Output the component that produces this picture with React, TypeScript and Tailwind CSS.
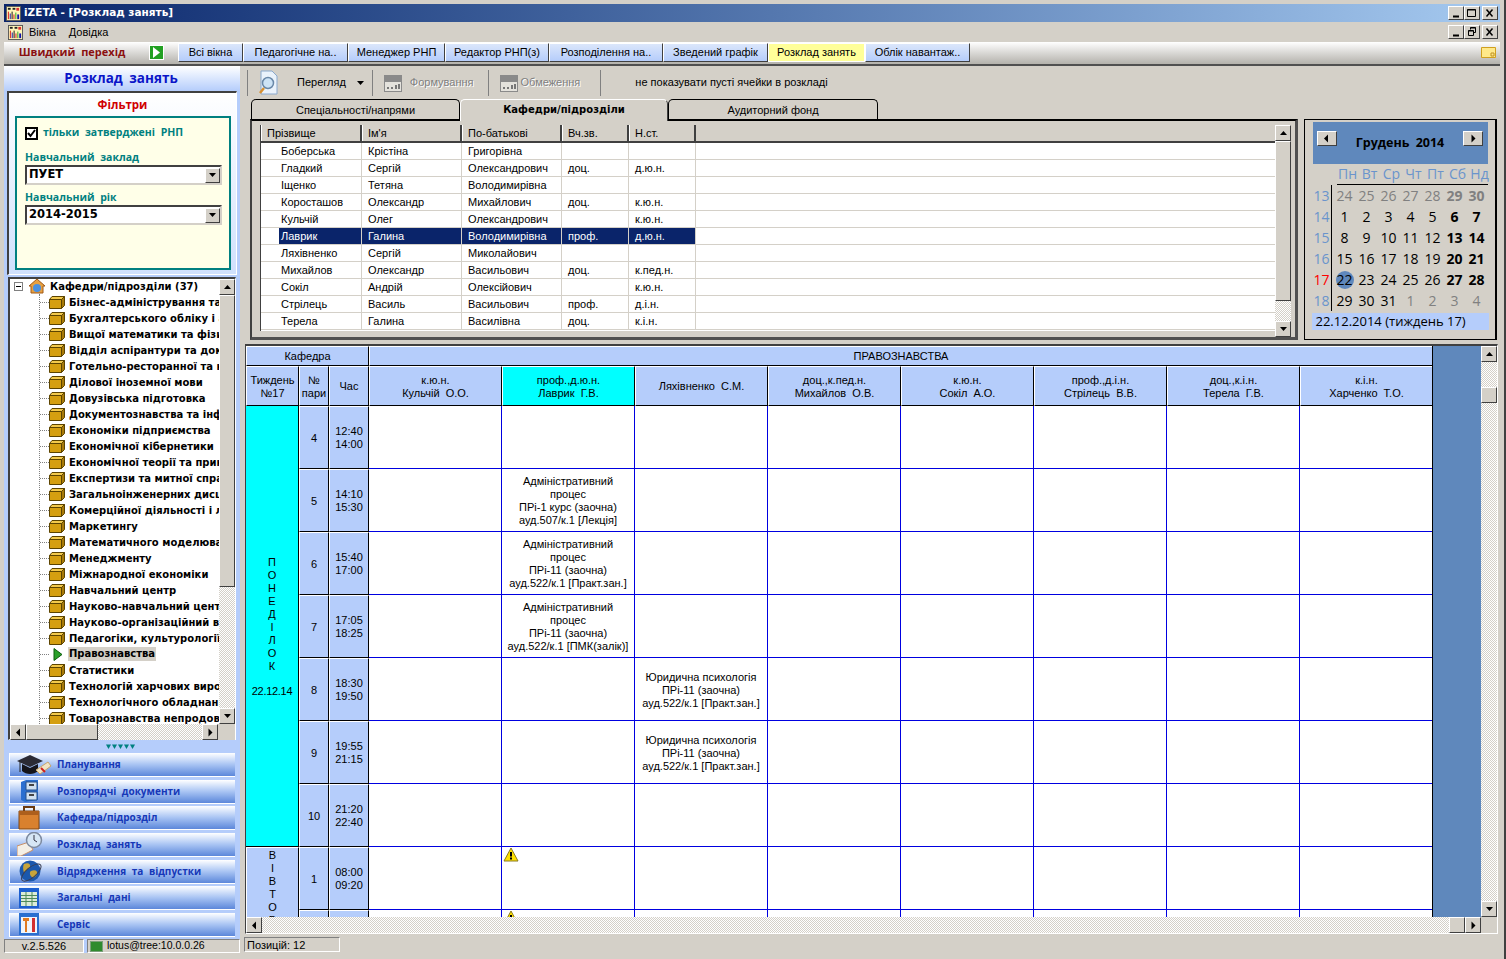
import type { ReactNode } from "react";

const raised =
  "border border-t-white border-l-white border-r-[#404040] border-b-[#404040] bg-[#d4d0c8] flex items-center justify-center shrink-0";
const dither =
  "bg-[repeating-conic-gradient(#d4d0c8_0%_25%,#ffffff_0%_50%)] bg-[length:2px_2px]";
const comic = "font-['Open_Sans',sans-serif] font-bold [word-spacing:3px]";
const headCell =
  "bg-[#b5cdfb] border border-t-white border-l-white border-r-black border-b-black flex items-center justify-center text-center leading-[13px] pt-[1px]";

const tabs = [
  { label: "Всі вікна", w: "w-[65px]" },
  { label: "Педагогічне на..", w: "w-[105px]" },
  { label: "Менеджер РНП", w: "w-[97px]" },
  { label: "Редактор РНП(з)", w: "w-[104px]" },
  { label: "Розподілення на..", w: "w-[114px]" },
  { label: "Зведений графік", w: "w-[105px]" },
  { label: "Розклад занять", w: "w-[97px]", active: true },
  { label: "Облік навантаж..", w: "w-[105px]" },
];

const departments = [
  "Бізнес-адміністрування та права",
  "Бухгалтерського обліку і аудиту",
  "Вищої математики та фізики",
  "Відділ аспірантури та докторантури",
  "Готельно-ресторанної та курортної",
  "Ділової іноземної мови",
  "Довузівська підготовка",
  "Документознавства та інформації",
  "Економіки підприємства",
  "Економічної кібернетики",
  "Економічної теорії та прикладної",
  "Експертизи та митної справи",
  "Загальноінженерних дисциплін",
  "Комерційної діяльності і логістики",
  "Маркетингу",
  "Математичного моделювання",
  "Менеджменту",
  "Міжнародної економіки",
  "Навчальний центр",
  "Науково-навчальний центр",
  "Науково-організаційний відділ",
  "Педагогіки, культурології та",
  "Правознавства",
  "Статистики",
  "Технологій харчових виробництв",
  "Технологічного обладнання",
  "Товарознавства непродовольчих",
];

const teachers = [
  ["Боберська", "Крістіна", "Григорівна", "", ""],
  ["Гладкий", "Сергій", "Олександрович", "доц.", "д.ю.н."],
  ["Іщенко", "Тетяна", "Володимирівна", "", ""],
  ["Коросташов", "Олександр", "Михайлович", "доц.", "к.ю.н."],
  ["Кульчій", "Олег", "Олександрович", "", "к.ю.н."],
  ["Лаврик", "Галина", "Володимирівна", "проф.", "д.ю.н."],
  ["Ляхівненко", "Сергій", "Миколайович", "", ""],
  ["Михайлов", "Олександр", "Васильович", "доц.", "к.пед.н."],
  ["Сокіл", "Андрій", "Олексійович", "", "к.ю.н."],
  ["Стрілець", "Василь", "Васильович", "проф.", "д.і.н."],
  ["Терела", "Галина", "Василівна", "доц.", "к.і.н."],
];

const colWidths = ["w-[101px]", "w-[100px]", "w-[100px]", "w-[67px]", "w-[67px]"];

const columns = [
  ["к.ю.н.", "Кульчій  О.О."],
  ["проф.,д.ю.н.", "Лаврик  Г.В."],
  ["", "Ляхівненко  С.М."],
  ["доц.,к.пед.н.", "Михайлов  О.В."],
  ["к.ю.н.", "Сокіл  А.О."],
  ["проф.,д.і.н.", "Стрілець  В.В."],
  ["доц.,к.і.н.", "Терела  Г.В."],
  ["к.і.н.", "Харченко  Т.О."],
];

const admin11 = ["Адміністративний", "процес", "ПРі-11 (заочна)"];
const law = ["Юридична психологія", "ПРі-11 (заочна)", "ауд.522/к.1 [Практ.зан.]"];

const slots = [
  { n: "4", t: ["12:40", "14:00"], cells: {} },
  {
    n: "5",
    t: ["14:10", "15:30"],
    cells: { 1: ["Адміністративний", "процес", "ПРі-1 курс (заочна)", "ауд.507/к.1 [Лекція]"] },
  },
  { n: "6", t: ["15:40", "17:00"], cells: { 1: [...admin11, "ауд.522/к.1 [Практ.зан.]"] } },
  { n: "7", t: ["17:05", "18:25"], cells: { 1: [...admin11, "ауд.522/к.1 [ПМК(залік)]"] } },
  { n: "8", t: ["18:30", "19:50"], cells: { 2: law } },
  { n: "9", t: ["19:55", "21:15"], cells: { 2: law } },
  { n: "10", t: ["21:20", "22:40"], cells: {} },
] as { n: string; t: string[]; cells: Record<number, string[]> }[];

const calendar = [
  { w: "13", days: ["24", "25", "26", "27", "28", "29", "30"], dimTo: 7 },
  { w: "14", days: ["1", "2", "3", "4", "5", "6", "7"], dimTo: 0 },
  { w: "15", days: ["8", "9", "10", "11", "12", "13", "14"], dimTo: 0 },
  { w: "16", days: ["15", "16", "17", "18", "19", "20", "21"], dimTo: 0 },
  { w: "17", days: ["22", "23", "24", "25", "26", "27", "28"], dimTo: 0 },
  { w: "18", days: ["29", "30", "31", "1", "2", "3", "4"], dimFrom: 3, dimTo: 0 },
];

function Arrow({ dir }: { dir: "up" | "down" | "left" | "right" }) {
  const points = {
    up: "1,6 8,6 4.5,2",
    down: "1,2 8,2 4.5,6",
    left: "6,0.5 6,8.5 2,4.5",
    right: "2.5,0.5 2.5,8.5 6.5,4.5",
  }[dir];
  return (
    <svg width="9" height="9" viewBox="0 0 9 9">
      <polygon points={points} fill="#000" />
    </svg>
  );
}

function AppIcon({ size }: { size: number }) {
  return (
    <svg width={size} height={size} viewBox="0 0 16 16">
      <rect width="16" height="16" fill="#fff6b8" />
      <rect x="0.5" y="0.5" width="15" height="15" fill="none" stroke="#555" />
      <rect x="2" y="2" width="3" height="2" fill="#222" />
      <rect x="7" y="2" width="3" height="2" fill="#222" />
      <rect x="11" y="2" width="3" height="3" fill="#d33" />
      <rect x="2" y="6" width="1" height="8" fill="#d11" />
      <rect x="4" y="8" width="1" height="6" fill="#11a" />
      <rect x="6" y="6" width="1" height="8" fill="#111" />
      <rect x="8" y="9" width="1" height="5" fill="#d11" />
      <rect x="10" y="7" width="1" height="7" fill="#2a2" />
      <rect x="12" y="9" width="2" height="5" fill="#11a" />
    </svg>
  );
}

function WinButton({ kind }: { kind: "min" | "max" | "restore" | "close" }) {
  return (
    <div className={`${raised} w-[16px] h-[14px]`}>
      <svg width="12" height="10" viewBox="0 0 12 10" fill="none" stroke="#000">
        {kind === "min" && <path d="M3 8.5h6" strokeWidth="2" />}
        {kind === "max" && <path d="M1.5 1.5h8v7h-8z M1.5 2h8" />}
        {kind === "restore" && <path d="M4.5 2.5V.5h5v5H8M2.5 3.5h5v5h-5z M4.5 1h5 M2.5 4h5" />}
        {kind === "close" && <path d="M2.5 1.5l6 7M8.5 1.5l-6 7" strokeWidth="1.5" />}
      </svg>
    </div>
  );
}

function DisabledGridIcon() {
  return (
    <svg width="18" height="20" viewBox="0 0 18 20">
      <path d="M0 2h18v17H0z" fill="#8a8a8a" />
      <path d="M1 9h16v9H1z" fill="#e4e2dc" />
      <path d="M3 14h2v2H3zM7 14h2v2H7zM11 12h2v4h-2zM14 11h2v5h-2z" fill="#777" />
    </svg>
  );
}

function FolderIcon() {
  return (
    <svg width="16" height="13" viewBox="0 0 16 13" className="shrink-0">
      <path d="M3 .5h12.5L12.5 3.5H.5z" fill="#f2c94c" stroke="#5c4400" />
      <path d="M.5 3.5h12v9H.5z" fill="#d59f10" stroke="#5c4400" />
      <path d="M12.5 3.5l3-3v9l-3 3z" fill="#a87a08" stroke="#5c4400" />
    </svg>
  );
}

function NavIcon({ name }: { name: string }) {
  if (name === "cap")
    return (
      <svg width="36" height="24" viewBox="0 0 36 24">
        <path d="M1 8L14 2l13 6-13 6z" fill="#2b2b35" />
        <path d="M6 11v7c4 4 12 4 16 0v-7l-8 4z" fill="#15151c" />
        <path d="M4 9v10" stroke="#222" />
        <path d="M20 17l12-8 3 4-11 8z" fill="#f1e4c4" stroke="#c9a46a" />
        <path d="M25 15l4 4" stroke="#d02020" strokeWidth="2" />
      </svg>
    );
  if (name === "cabinet")
    return (
      <svg width="20" height="24" viewBox="0 0 20 24">
        <path d="M2 3l5-2h12v20l-13 2-4-2z" fill="#2a6fd0" />
        <path d="M7 3h11v8H7zM7 13h11v8H7z" fill="#cfe0f0" stroke="#27518a" />
        <path d="M10 6h5M10 16h5" stroke="#444" strokeWidth="2" />
      </svg>
    );
  if (name === "case")
    return (
      <svg width="22" height="24" viewBox="0 0 22 24">
        <path d="M6 5V1h10v4" fill="none" stroke="#6b3a10" strokeWidth="2" />
        <path d="M1 5h20v18H1z" fill="#d9812e" stroke="#804713" />
        <path d="M1 5h20v4H1z" fill="#ad5f1c" />
      </svg>
    );
  if (name === "clock")
    return (
      <svg width="26" height="24" viewBox="0 0 26 24">
        <path d="M0 14l12-4 4 8-12 6H0z" fill="#f4efe6" stroke="#c8906a" />
        <circle cx="17" cy="8" r="7.5" fill="#d6e6f5" stroke="#7d8aa0" strokeWidth="1.5" />
        <path d="M17 3v5l3 2" stroke="#334" fill="none" />
      </svg>
    );
  if (name === "globe")
    return (
      <svg width="24" height="24" viewBox="0 0 24 24">
        <circle cx="12" cy="12" r="10.5" fill="#1b58ad" />
        <path d="M6 5c4-2 7 0 6 3s-4 2-5 5-3-5-1-8zM13 12c4-2 7 0 6 3s-3 4-5 3-3-5-1-6z" fill="#c7a43a" />
        <ellipse cx="12" cy="14" rx="12" ry="5" fill="none" stroke="#3a3f55" transform="rotate(-40 12 12)" />
      </svg>
    );
  if (name === "table")
    return (
      <svg width="20" height="20" viewBox="0 0 20 20">
        <path d="M0 0h20v20H0z" fill="#1c5fd0" />
        <path d="M2 4h16v14H2z" fill="#dcecd8" />
        <path d="M2 7.5h16M2 10.5h16M2 13.5h16M7 4v14M13 4v14" stroke="#4f8a5a" />
      </svg>
    );
  return (
    <svg width="20" height="22" viewBox="0 0 20 22">
      <path d="M0 0h20v22H0z" fill="#2a6fd0" />
      <path d="M2 4h16v16H2z" fill="#f0f4fa" />
      <path d="M4 5h6v3H8v11H6V8H4z" fill="#e07a20" />
      <path d="M13 5h3v14h-3z" fill="#d33030" />
    </svg>
  );
}

function WarnIcon() {
  return (
    <svg width="16" height="15" viewBox="0 0 16 15">
      <path d="M8 1l7 13H1z" fill="#ffe100" stroke="#8a7a20" strokeLinejoin="round" />
      <path d="M7 5h2v4.5H7zM7 10.5h2v2H7z" fill="#000" />
    </svg>
  );
}

function VScroll({ children }: { children: ReactNode }) {
  return <div className={`w-[16px] flex flex-col shrink-0 ${dither}`}>{children}</div>;
}

function ScrollBtn({ dir, className = "" }: { dir: "up" | "down" | "left" | "right"; className?: string }) {
  return (
    <div className={`${raised} w-[16px] h-[16px] ${className}`}>
      <Arrow dir={dir} />
    </div>
  );
}

function Sidebar() {
  const nav = [
    { icon: "cap", label: "Планування", pad: "pl-[6px]" },
    { icon: "cabinet", label: "Розпорядчі документи", pad: "pl-[9px]" },
    { icon: "case", label: "Кафедра/підрозділ", pad: "pl-[8px]" },
    { icon: "clock", label: "Розклад занять", pad: "pl-[7px]" },
    { icon: "globe", label: "Відрядження та відпустки", pad: "pl-[8px]" },
    { icon: "table", label: "Загальні дані", pad: "pl-[9px]" },
    { icon: "tools", label: "Сервіс", pad: "pl-[9px]" },
  ];
  return (
    <aside className="w-[236px] h-[887px] bg-[#b5cdfb] flex flex-col shrink-0">
      <div className={`h-[25px] bg-gradient-to-b from-white to-[#b5cdfb] flex items-center justify-center text-[13.5px] text-[#0a14c8] ${comic} pr-[2px]`}>
        Розклад занять
      </div>
      <div className="ml-[3px] w-[230px] h-[184px] border-t-2 border-l-2 border-t-[#404040] border-l-[#404040] border-r border-b border-r-white border-b-white bg-gradient-to-b from-white to-[#cfe0fd] flex flex-col">
        <div className={`h-[23px] flex items-center justify-center text-[11.5px] text-[#d00000] ${comic}`}>Фільтри</div>
        <div className="ml-[6px] w-[216px] h-[154px] border-2 border-[#008080] bg-[#ffffe8] px-[8px] pt-[8px]">
          <div className="flex items-center gap-[5px] h-[14px]">
            <div className="w-[13px] h-[13px] border-2 border-black bg-white flex items-center justify-center">
              <svg width="9" height="9" viewBox="0 0 9 9" fill="none" stroke="#000" strokeWidth="2">
                <path d="M1 4l2.5 3L8 1" />
              </svg>
            </div>
            <span className={`text-[10.5px] text-[#008080] ${comic}`}>тільки затверджені РНП</span>
          </div>
          <div className={`mt-[11px] text-[10.5px] leading-[13px] text-[#008080] ${comic}`}>Навчальний заклад</div>
          <div className="h-[1px]" />
          <Combo value="ПУЕТ" />
          <div className={`mt-[6px] text-[10.5px] leading-[13px] text-[#008080] ${comic}`}>Навчальний рік</div>
          <div className="h-[1px]" />
          <Combo value="2014-2015" />
        </div>
      </div>
      <div className="mt-[2px] ml-[4px] w-[228px] h-[463px] border-t-2 border-l-2 border-t-[#404040] border-l-[#404040] border-r border-b border-r-white border-b-white bg-white flex flex-col">
        <div className="flex h-[445px]">
          <div className="flex-1 overflow-hidden relative font-['DejaVu_Sans',sans-serif] font-bold text-[10px] text-black -mt-[1px]">
            <div className="h-[16px] flex items-center pl-[4px] whitespace-nowrap">
              <div className="w-[9px] h-[9px] border border-[#808080] flex items-center justify-center shrink-0">
                <div className="w-[5px] h-[1px] bg-black" />
              </div>
              <svg width="18" height="16" viewBox="0 0 18 16" className="ml-[5px] shrink-0">
                <path d="M9 1L1 8h2v7h12V8h2z" fill="#e8a040" stroke="#a05a18" />
                <circle cx="9" cy="10" r="4" fill="#4a90e0" />
              </svg>
              <span className="ml-[4px]">Кафедри/підрозділи (37)</span>
            </div>
            <div className="ml-[29px] border-l border-dotted border-[#808080] h-[430px] overflow-hidden">
              {departments.map((name) => (
                <div key={name} className="h-[16px] flex items-center whitespace-nowrap">
                  <div className="w-[9px] border-t border-dotted border-[#808080] shrink-0" />
                  {name === "Правознавства" ? (
                    <svg width="16" height="13" viewBox="0 0 16 13" className="shrink-0">
                      <path d="M5 .5v12l8-6z" fill="#2aa02a" stroke="#0c5c0c" />
                    </svg>
                  ) : (
                    <FolderIcon />
                  )}
                  <span className={name === "Правознавства" ? "ml-[3px] px-[1px] bg-[#d4d0c8] leading-[14px]" : "ml-[4px]"}>{name}</span>
                </div>
              ))}
            </div>
          </div>
          <VScroll>
            <ScrollBtn dir="up" />
            <div className={`${raised} w-[16px] h-[292px]`} />
            <div className="flex-1" />
            <ScrollBtn dir="down" />
          </VScroll>
        </div>
        <div className="flex h-[16px] items-stretch">
          <ScrollBtn dir="left" />
          <div className={`flex-1 flex ${dither}`}>
            <div className={`${raised} w-[72px] h-[16px]`} />
          </div>
          <ScrollBtn dir="right" />
          <div className="w-[17px] bg-[#d4d0c8]" />
        </div>
      </div>
      <div className="h-[13px] flex items-center justify-center gap-[1px] ml-[-4px]">
        {[0, 1, 2, 3, 4].map((i) => (
          <svg key={i} width="5" height="5" viewBox="0 0 5 5">
            <path d="M0 .5h5L2.5 5z" fill="#008080" />
          </svg>
        ))}
      </div>
      <nav className="ml-[5px] w-[226px] h-[184px] flex flex-col justify-between">
        {nav.map((item) => (
          <div key={item.icon} className={`h-[24px] flex items-center bg-gradient-to-b from-white via-[#a9c4f3] to-[#5c87da] border-b border-b-white border-l border-l-white text-[10px] text-[#1638b8] ${comic}`}>
            <div className={`w-[47px] h-[24px] flex items-center justify-start shrink-0 ${item.pad}`}>
              <NavIcon name={item.icon} />
            </div>
            {item.label}
          </div>
        ))}
      </nav>
      <div className="mt-[2px] flex gap-[3px] h-[14px] text-[11px]">
        <div className="w-[80px] border-t border-l border-t-[#808080] border-l-[#808080] border-b border-r border-b-white border-r-white bg-[#d4d0c8] flex items-center justify-center">v.2.5.526</div>
        <div className="w-[153px] border-t border-l border-t-[#808080] border-l-[#808080] border-b border-r border-b-white border-r-white bg-[#d4d0c8] flex items-center">
          <div className="ml-[2px] w-[13px] h-[11px] bg-[#2e8b2e] border border-[#7aa07a]" />
          <span className="ml-[4px] text-[10.5px]">lotus@tree:10.0.0.26</span>
        </div>
      </div>
    </aside>
  );
}

function Combo({ value }: { value: string }) {
  return (
    <div className="h-[20px] w-[197px] border-2 border-t-[#404040] border-l-[#404040] border-r-[#d4d0c8] border-b-[#d4d0c8] bg-white flex items-center justify-between font-['DejaVu_Sans',sans-serif] font-bold text-[11.5px]">
      <span className="pl-[2px]">{value}</span>
      <div className={`${raised} w-[15px] h-[15px]`}>
        <Arrow dir="down" />
      </div>
    </div>
  );
}

function TeacherGrid() {
  return (
    <div className="w-[1048px] h-[221px] border-t-2 border-l-2 border-t-black border-l-[#404040] border-r-[3px] border-b-[3px] border-r-[#505050] border-b-[#505050] pl-[8px] pt-[4px] pr-[4px] flex">
      <div className="w-[1017px] h-[206px] bg-white flex flex-col border-l border-l-[#404040]">
        <div className="h-[18px] flex bg-[#d4d0c8] border-b-2 border-b-[#404040] shrink-0">
          {["Прізвище", "Ім'я", "По-батькові", "Вч.зв.", "Н.ст."].map((h, i) => (
            <div key={h} className={`${colWidths[i]} border-r-2 border-r-[#404040] border-l border-l-white pl-[5px] leading-[17px]`}>
              {h}
            </div>
          ))}
        </div>
        {teachers.map((row) => {
          const selected = row[0] === "Лаврик";
          return (
            <div key={row[0]} className="h-[17px] flex border-b border-b-[#d4d0c8] shrink-0 leading-[16px]">
              {row.map((v, i) => (
                <div
                  key={i}
                  className={`${colWidths[i]} border-r border-r-[#d4d0c8] ${selected ? "bg-[#0a246a] text-white" : ""} ${i === 0 ? "ml-[18px] !w-[83px] pl-[2px]" : "pl-[6px]"}`}
                >
                  {v}
                </div>
              ))}
            </div>
          );
        })}
      </div>
      <VScroll>
        <ScrollBtn dir="up" />
        <div className={`${raised} w-[16px] h-[160px]`} />
        <div className="flex-1" />
        <ScrollBtn dir="down" />
      </VScroll>
    </div>
  );
}

function Calendar() {
  const names = ["Пн", "Вт", "Ср", "Чт", "Пт", "Сб", "Нд"];
  return (
    <div className="ml-[6px] w-[193px] h-[221px] border border-black border-r-2 flex flex-col items-center font-['Open_Sans',sans-serif] text-[14px] pt-[2px]">
      <div className="w-[175px] h-[42px] bg-[#5f88bc] flex items-center justify-between px-[4px] shrink-0">
        <div className={`${raised} w-[20px] h-[15px] -mt-[10px]`}><Arrow dir="left" /></div>
        <span className="font-bold text-[12.5px] [word-spacing:3px] mt-[1px]">Грудень 2014</span>
        <div className={`${raised} w-[20px] h-[15px] -mt-[10px]`}><Arrow dir="right" /></div>
      </div>
      <div className="w-[175px] flex flex-col mt-[1px]">
        <div className="h-[20px] ml-[24px] w-[151px] grid grid-cols-[repeat(7,22px)] border-b border-b-black text-[#6a94cc] text-center leading-[18px]">
          {names.map((n) => (
            <span key={n}>{n}</span>
          ))}
        </div>
        <div className="flex flex-col">
          {calendar.map((row) => (
            <div key={row.w} className="h-[21px] flex items-center">
              <div className={`w-[21px] h-[21px] border-r border-r-black text-center leading-[21px] overflow-hidden ${row.w === "17" ? "text-[#ff0000]" : "text-[#6a94cc]"}`}>{row.w}</div>
              <div className="grid grid-cols-[repeat(7,22px)] text-center ml-[2px]">
                {row.days.map((d, i) => {
                  const dim = i < row.dimTo || (row.dimFrom !== undefined && i >= row.dimFrom);
                  const weekend = i >= 5;
                  const today = row.w === "17" && d === "22";
                  return (
                    <span
                      key={i}
                      className={`leading-[21px] ${dim ? "text-[#808080]" : "text-black"} ${weekend && row.w !== "18" ? "font-bold" : ""}`}
                    >
                      {today ? (
                        <span className="inline-block w-[18px] h-[18px] rounded-full bg-[#5f88bc] leading-[18px]">{d}</span>
                      ) : (
                        d
                      )}
                    </span>
                  );
                })}
              </div>
            </div>
          ))}
        </div>
        <div className="mt-[2px] -mx-[1px] h-[17px] bg-[#b5cdfb] pl-[4px] leading-[17px] text-[13px] whitespace-nowrap">22.12.2014 (тиждень 17)</div>
      </div>
    </div>
  );
}

function Schedule() {
  return (
    <div className="ml-[2px] w-[1253px] h-[590px] border-t-2 border-l border-t-[#404040] border-l-[#404040] border-b border-r border-b-white border-r-white flex flex-col">
      <div className="flex h-[571px]">
        <div className="w-[1187px] h-[571px] overflow-hidden bg-white">
          <div className="grid grid-cols-[53px_30px_40px_repeat(8,133px)] grid-rows-[20px_40px_repeat(9,63px)]">
            <div className={`${headCell} col-span-3`}>Кафедра</div>
            <div className={`${headCell} col-span-8`}>ПРАВОЗНАВСТВА</div>
            <div className={headCell}>Тиждень<br />№17</div>
            <div className={headCell}>№<br />пари</div>
            <div className={headCell}>Час</div>
            {columns.map((c, i) => (
              <div key={i} className={`${headCell} whitespace-pre ${i === 1 ? "!bg-[#00ffff]" : ""}`}>
                <div>
                  {c[0] && <div>{c[0]}</div>}
                  <div>{c[1]}</div>
                </div>
              </div>
            ))}
            {slots.map((s, si) => (
              <div key={s.n} className="contents">
                {si === 0 && (
                  <div className="row-span-7 bg-[#00ffff] border-r border-b border-r-black border-b-black flex flex-col items-center justify-center leading-[13px] text-center pt-[1px]">
                    {"ПОНЕДІЛОК".split("").map((l, i) => (
                      <span key={i}>{l}</span>
                    ))}
                    <span className="mt-[12px] tracking-[-0.3px]">22.12.14</span>
                  </div>
                )}
                <div className={headCell}>{s.n}</div>
                <div className={headCell}>
                  <div>
                    {s.t.map((t) => (
                      <div key={t}>{t}</div>
                    ))}
                  </div>
                </div>
                {columns.map((_, i) => (
                  <div key={i} className="border-r border-b border-r-[#0000e0] border-b-[#0000e0] flex items-center justify-center text-center leading-[13px] pt-[2px]">
                    {s.cells[i] && (
                      <div>
                        {s.cells[i].map((l, k) => (
                          <div key={k}>{l}</div>
                        ))}
                      </div>
                    )}
                  </div>
                ))}
              </div>
            ))}
            <div className="row-span-2 bg-[#b5cdfb] border border-t-white border-l-white border-r-black flex flex-col items-center leading-[13px] pt-[1px]">
              {"ВІВТОРОК".split("").map((l, i) => (
                <span key={i}>{l}</span>
              ))}
            </div>
            {[
              { n: "1", t: ["08:00", "09:20"] },
              { n: "2", t: ["09:30", "10:50"] },
            ].map((s) => (
              <div key={s.n} className="contents">
                <div className={headCell}>{s.n}</div>
                <div className={headCell}>
                  <div>
                    {s.t.map((t) => (
                      <div key={t}>{t}</div>
                    ))}
                  </div>
                </div>
                {columns.map((_, i) => (
                  <div key={i} className="border-r border-b border-r-[#0000e0] border-b-[#0000e0] flex items-start pl-[1px]">
                    {i === 1 && <WarnIcon />}
                  </div>
                ))}
              </div>
            ))}
          </div>
        </div>
        <div className="w-[49px] bg-[#5f88bc] border-l border-l-black -ml-[1px] shrink-0" />
        <VScroll>
          <ScrollBtn dir="up" />
          <div className="h-[25px]" />
          <div className={`${raised} w-[16px] h-[16px]`} />
          <div className="flex-1" />
          <ScrollBtn dir="down" />
        </VScroll>
      </div>
      <div className="flex h-[16px] w-[1251px]">
        <ScrollBtn dir="left" />
        <div className={`w-[1187px] ${dither}`} />
        <div className={`${raised} w-[16px] h-[16px]`} />
        <ScrollBtn dir="right" />
      </div>
    </div>
  );
}

export default function App() {
  return (
    <div className="w-[1506px] h-[959px] bg-[#d4d0c8] overflow-hidden font-['Liberation_Sans',sans-serif] text-[11px] text-black px-[4px] pt-[4px] border-r-2 border-r-[#404040]">
      <div className="h-[18px] bg-gradient-to-r from-[#0a246a] to-[#a6caf0] flex items-center pr-[2px]">
        <div className="w-[18px] pl-[2px]"><AppIcon size={15} /></div>
        <span className="ml-[2px] font-['DejaVu_Sans',sans-serif] font-bold text-[10.5px] text-white flex-1">iZETA - [Розклад занять]</span>
        <WinButton kind="min" />
        <WinButton kind="max" />
        <div className="w-[2px]" />
        <WinButton kind="close" />
      </div>
      <div className="h-[20px] flex items-center pr-[2px]">
        <div className="w-[21px] pl-[4px]"><AppIcon size={15} /></div>
        <span className="ml-[4px]">Вікна</span>
        <span className="ml-[13px] flex-1">Довідка</span>
        <WinButton kind="min" />
        <WinButton kind="restore" />
        <div className="w-[2px]" />
        <WinButton kind="close" />
      </div>
      <div className="h-[24px] bg-gradient-to-b from-white to-[#b4b2ac] border-b-2 border-b-[#505050] flex items-start">
        <div className={`w-[136px] h-[20px] flex items-center justify-center text-[11px] text-[#8a1010] ${comic}`}>Швидкий перехід</div>
        <div className="mt-[3px] ml-[9px] w-[15px] h-[15px] bg-[#22a022] border border-white flex items-center justify-center">
          <svg width="9" height="11" viewBox="0 0 9 11">
            <path d="M1 0v11l7-5.5z" fill="#fff" />
          </svg>
        </div>
        <div className="ml-[14px] flex mt-[1px]">
          {tabs.map((t) => (
            <div
              key={t.label}
              className={`${t.w} h-[19px] pb-[1px] border border-t-white border-l-white border-r-[#404040] border-b-[#404040] flex items-center justify-center text-[11px] whitespace-nowrap ${t.active ? "bg-[#ffff99] border-t-[#404040] border-l-[#404040] border-r-white border-b-white" : "bg-gradient-to-b from-[#dbe6fb] to-[#b5cdfb]"}`}
            >
              {t.label}
            </div>
          ))}
        </div>
        <div className="flex-1" />
        <svg width="15" height="11" viewBox="0 0 15 11" className="mt-[5px] mr-[4px]">
          <path d="M.5.5h14v10H.5z" fill="#ffe98a" stroke="#d0a020" />
          <path d="M10 6h3v3h-3z" fill="none" stroke="#c09020" />
        </svg>
      </div>
      <main className="flex">
        <Sidebar />
        <div className="w-[3px] shrink-0" />
        <div className="w-[1259px] flex flex-col">
          <div className="h-[33px] flex items-center text-[11px]">
            <div className="ml-[4px] w-[1px] h-[26px] bg-white border-l border-l-[#808080]" />
            <svg width="22" height="26" viewBox="0 0 22 26" className="ml-[10px]">
              <path d="M3 1h11l5 5v18H3z" fill="#eaf2fb" stroke="#8aa8cc" />
              <circle cx="10" cy="13" r="5.5" fill="#cde3f6" stroke="#6a88a8" strokeWidth="1.5" />
              <path d="M6 18l-4 5" stroke="#d89030" strokeWidth="2.5" />
            </svg>
            <span className="ml-[17px]">Перегляд</span>
            <svg width="7" height="4" viewBox="0 0 7 4" className="ml-[11px]"><path d="M0 0h7L3.5 4z" fill="#000" /></svg>
            <div className="ml-[8px] w-[1px] h-[26px] bg-[#808080]" />
            <div className="ml-[11px]"><DisabledGridIcon /></div>
            <span className="ml-[8px] text-[#808080] [text-shadow:1px_1px_0_#fff]">Формування</span>
            <div className="ml-[14px] w-[1px] h-[26px] bg-[#808080]" />
            <div className="ml-[11px]"><DisabledGridIcon /></div>
            <span className="ml-[3px] text-[#808080] [text-shadow:1px_1px_0_#fff]">Обмеження</span>
            <div className="ml-[20px] w-[1px] h-[26px] bg-[#808080]" />
            <span className="ml-[34px]">не показувати пусті ячейки в розкладі</span>
          </div>
          <div className="h-[20px] ml-[8px] flex text-center leading-[20px]">
            <div className="w-[209px] border border-black border-b-0 rounded-t-[5px] border-t-black">Спеціальності/напрями</div>
            <div className="w-[208px] h-[22px] border-t border-t-white border-l border-l-white border-r border-r-[#404040] rounded-t-[5px] bg-[#d4d0c8] font-['DejaVu_Sans',sans-serif] font-bold text-[10px] relative z-10">Кафедри/підрозділи</div>
            <div className="w-[210px] border border-black border-b-0 rounded-t-[5px]">Аудиторний фонд</div>
          </div>
          <div className="flex">
            <div className="ml-[7px]"><TeacherGrid /></div>
            <Calendar />
          </div>
          <div className="h-[4px]" />
          <Schedule />
          <div className="mt-[3px] ml-[1px] w-[96px] h-[15px] border-t border-l border-t-[#808080] border-l-[#808080] border-b border-r border-b-white border-r-white pl-[2px] leading-[14px]">Позицій: 12</div>
        </div>
      </main>
    </div>
  );
}
